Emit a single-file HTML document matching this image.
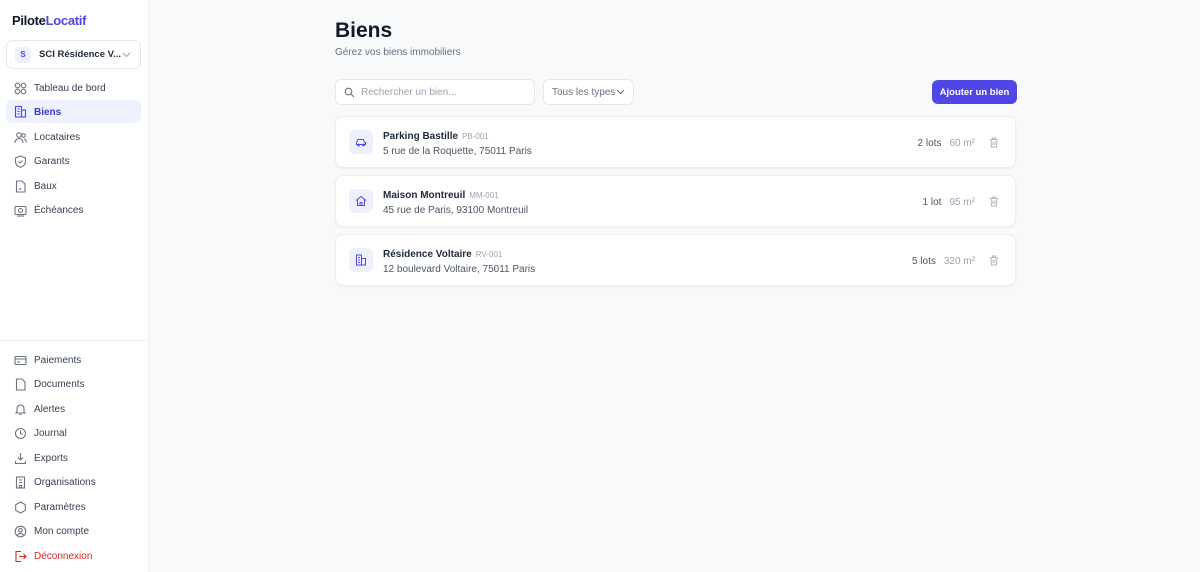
<!DOCTYPE html>
<html><head><meta charset="utf-8"><style>
*{box-sizing:border-box;margin:0;padding:0}
body{width:1200px;height:572px;font-family:"Liberation Sans",sans-serif;background:#f8f9fb;position:relative;overflow:hidden;color:#111827}
.sb{position:absolute;left:0;top:0;width:149px;height:572px;background:#fff;border-right:1px solid #eceef2}
.logo{position:absolute;left:12px;top:13px;font-size:13px;font-weight:bold;color:#111827;letter-spacing:-.3px}
.logo span{color:#4f46e5}
.org{position:absolute;left:6px;top:40px;width:135px;height:29px;border:1px solid #e5e7eb;border-radius:7px;font-size:9.5px;font-weight:bold;color:#1f2937}
.org .av{position:absolute;left:8px;top:6px;width:16px;height:16px;border-radius:4px;background:#eef0fe;color:#4f46e5;font-size:8px;text-align:center;line-height:16px}
.org .t{position:absolute;left:32px;top:8px}
.org svg{position:absolute;right:9px;top:11px}
.it{position:absolute;left:6px;width:135px;height:23px;border-radius:6px;font-size:10px;color:#374151;line-height:23px;padding-left:28px;margin-top:1px}
.it svg{position:absolute;left:8px;top:5px}
.it.a{background:#eef2ff;color:#4338ca;font-weight:bold;margin-top:0;line-height:25px}
.it.r{color:#dc2626}
.div{position:absolute;left:0;top:340px;width:148px;border-top:1px solid #eceef2}
h1{position:absolute;left:335px;top:19px;font-size:21px;font-weight:bold;color:#111827}
.sub{position:absolute;left:335px;top:47px;font-size:10px;color:#6b7280}
.search{position:absolute;left:335px;top:79px;width:200px;height:26px;background:#fff;border:1px solid #e5e7eb;border-radius:6px;font-size:10px;color:#9ca3af;padding-left:25px;display:flex;align-items:center}
.search svg{position:absolute;left:8px;top:7px}
.sel{position:absolute;left:543px;top:79px;width:91px;height:26px;background:#fff;border:1px solid #e5e7eb;border-radius:6px;font-size:10px;color:#6b7280;padding-left:8px;display:flex;align-items:center}
.sel svg{position:absolute;right:8px;top:9px}
.btn{position:absolute;left:932px;top:80px;width:85px;height:24px;background:#4f46e5;border-radius:6px;color:#fff;font-size:9.5px;font-weight:bold;display:flex;align-items:center;justify-content:center}
.card{position:absolute;left:335px;width:681px;height:52px;background:#fff;border:1px solid #eceef2;border-radius:8px;box-shadow:0 1px 2px rgba(0,0,0,.05)}
.ic{position:absolute;left:13px;top:13px;width:24px;height:24px;border-radius:6px;background:#eef0fe}
.ic svg{position:absolute;left:6px;top:6px}
.nm{position:absolute;left:47px;top:14px;font-size:10px;font-weight:bold;color:#1f2937}
.nm span{font-weight:normal;color:#9ca3af;font-size:8px;margin-left:4px}
.ad{position:absolute;left:47px;top:29px;font-size:10px;color:#4b5563}
.rt{position:absolute;right:40px;top:21px;font-size:10px;color:#4b5563}
.rt span{color:#9ca3af;margin-left:8px}
.tr{position:absolute;right:16px;top:20px}
</style></head><body>
<div class="sb">
<div class="logo">Pilote<span>Locatif</span></div>
<div class="org"><div class="av">S</div><div class="t">SCI Résidence V...</div><svg width="9" height="6" viewBox="0 0 9 6"><path d="M1 1l3.5 3.5L8 1" stroke="#9ca3af" fill="none" stroke-width="1.1"/></svg></div>
<div class="it" style="top:76px"><svg width="13" height="13" viewBox="0 0 13 13" fill="none" stroke="#6b7280" stroke-width="1.1"><circle cx="3.5" cy="3.5" r="2.3"/><circle cx="9.5" cy="3.5" r="2.3"/><circle cx="3.5" cy="9.5" r="2.3"/><circle cx="9.5" cy="9.5" r="2.3"/></svg>Tableau de bord</div>
<div class="it a" style="top:100px"><svg width="13" height="13" viewBox="0 0 13 13" fill="none" stroke="#4f46e5" stroke-width="1.1"><rect x="1.5" y="1.5" width="6" height="10.5"/><rect x="7.5" y="5" width="4" height="7"/><path d="M3.5 4h2M3.5 6.5h2M3.5 9h2"/></svg>Biens</div>
<div class="it" style="top:125px"><svg width="13" height="13" viewBox="0 0 13 13" fill="none" stroke="#6b7280" stroke-width="1.1"><circle cx="5" cy="4" r="2.3"/><path d="M1 12c0-3 2-4.5 4-4.5s4 1.5 4 4.5"/><circle cx="9.5" cy="4.5" r="1.8"/><path d="M10 8c1.5.3 2.3 1.6 2.3 3.5"/></svg>Locataires</div>
<div class="it" style="top:149px"><svg width="13" height="13" viewBox="0 0 13 13" fill="none" stroke="#6b7280" stroke-width="1.1"><path d="M6.5 1L11.5 3v3.5c0 3-2.2 4.8-5 5.8-2.8-1-5-2.8-5-5.8V3z"/><path d="M4.5 6.5l1.5 1.5 2.5-2.5"/></svg>Garants</div>
<div class="it" style="top:174px"><svg width="13" height="13" viewBox="0 0 13 13" fill="none" stroke="#6b7280" stroke-width="1.1"><path d="M2.5 1h5.5l3 3v8h-8.5z"/><path d="M4.5 9h3"/></svg>Baux</div>
<div class="it" style="top:198px"><svg width="13" height="13" viewBox="0 0 13 13" fill="none" stroke="#6b7280" stroke-width="1.1"><rect x="1" y="2.5" width="11" height="8" rx="1"/><circle cx="6.5" cy="6.5" r="2"/><path d="M3 12h7"/></svg>Échéances</div>
<div class="div"></div>
<div class="it" style="top:348px"><svg width="13" height="13" viewBox="0 0 13 13" fill="none" stroke="#6b7280" stroke-width="1.1"><rect x="1" y="2.5" width="11" height="8" rx="1"/><path d="M1 5h11M3 8h3"/></svg>Paiements</div>
<div class="it" style="top:372px"><svg width="13" height="13" viewBox="0 0 13 13" fill="none" stroke="#6b7280" stroke-width="1.1"><path d="M2.5 1h5.5l3 3v8h-8.5z"/></svg>Documents</div>
<div class="it" style="top:397px"><svg width="13" height="13" viewBox="0 0 13 13" fill="none" stroke="#6b7280" stroke-width="1.1"><path d="M3 9V5.5a3.5 3.5 0 017 0V9l1 1H2z"/><path d="M5.5 11.5h2"/></svg>Alertes</div>
<div class="it" style="top:421px"><svg width="13" height="13" viewBox="0 0 13 13" fill="none" stroke="#6b7280" stroke-width="1.1"><circle cx="6.5" cy="6.5" r="5"/><path d="M6.5 3.5v3l2 1.3"/></svg>Journal</div>
<div class="it" style="top:446px"><svg width="13" height="13" viewBox="0 0 13 13" fill="none" stroke="#6b7280" stroke-width="1.1"><path d="M6.5 1v7M4 5.5l2.5 2.5L9 5.5M1.5 9v2.5h10V9"/></svg>Exports</div>
<div class="it" style="top:470px"><svg width="13" height="13" viewBox="0 0 13 13" fill="none" stroke="#6b7280" stroke-width="1.1"><rect x="2.5" y="1" width="8" height="11"/><path d="M5 4h3M5 6.5h3M5.5 12V9.5h2V12"/></svg>Organisations</div>
<div class="it" style="top:495px"><svg width="13" height="13" viewBox="0 0 13 13" fill="none" stroke="#6b7280" stroke-width="1.1"><path d="M6.5 1l4.8 2.7v5.6L6.5 12 1.7 9.3V3.7z"/></svg>Paramètres</div>
<div class="it" style="top:519px"><svg width="13" height="13" viewBox="0 0 13 13" fill="none" stroke="#6b7280" stroke-width="1.1"><circle cx="6.5" cy="6.5" r="5.3"/><circle cx="6.5" cy="5.3" r="1.8"/><path d="M3.3 10.5c1-1.5 2-2 3.2-2s2.2.5 3.2 2"/></svg>Mon compte</div>
<div class="it r" style="top:544px"><svg width="13" height="13" viewBox="0 0 13 13" fill="none" stroke="#dc2626" stroke-width="1.1"><path d="M7 1.5H2v10h5M5 6.5h7M9.5 4l2.5 2.5L9.5 9"/></svg>Déconnexion</div>
</div>
<h1>Biens</h1>
<div class="sub">Gérez vos biens immobiliers</div>
<div class="search"><svg width="11" height="11" viewBox="0 0 11 11" fill="none" stroke="#6b7280" stroke-width="1.1"><circle cx="4.5" cy="4.5" r="3.3"/><path d="M7 7l3 3"/></svg>Rechercher un bien...</div>
<div class="sel">Tous les types<svg width="9" height="6" viewBox="0 0 9 6"><path d="M1 1l3.5 3.5L8 1" stroke="#6b7280" fill="none" stroke-width="1.1"/></svg></div>
<div class="btn">Ajouter un bien</div>

<div class="card" style="top:116px"><div class="ic"><svg width="12" height="12" viewBox="0 0 12 12" fill="none" stroke="#4f46e5" stroke-width="1"><path d="M1.5 8.5V6.5l1.5-3h5l2 3h.5v2z"/><circle cx="3.5" cy="9" r=".9"/><circle cx="8.5" cy="9" r=".9"/></svg></div><div class="nm">Parking Bastille<span>PB-001</span></div><div class="ad">5 rue de la Roquette, 75011 Paris</div><div class="rt">2 lots<span>60 m²</span></div><svg class="tr" width="10" height="11" viewBox="0 0 10 11" fill="none" stroke="#b0b5bf" stroke-width="1"><path d="M1 2.5h8M3.5 2.5V1h3v1.5M2 2.5l.5 7.5h5l.5-7.5M4 4.5v3.5M6 4.5v3.5"/></svg></div>
<div class="card" style="top:175px"><div class="ic"><svg width="12" height="12" viewBox="0 0 12 12" fill="none" stroke="#4f46e5" stroke-width="1"><path d="M1 5.5L6 1.5l5 4M2.5 4.5v6h7v-6M5 10.5V7.5h2v3"/></svg></div><div class="nm">Maison Montreuil<span>MM-001</span></div><div class="ad">45 rue de Paris, 93100 Montreuil</div><div class="rt">1 lot<span>95 m²</span></div><svg class="tr" width="10" height="11" viewBox="0 0 10 11" fill="none" stroke="#b0b5bf" stroke-width="1"><path d="M1 2.5h8M3.5 2.5V1h3v1.5M2 2.5l.5 7.5h5l.5-7.5M4 4.5v3.5M6 4.5v3.5"/></svg></div>
<div class="card" style="top:234px"><div class="ic"><svg width="12" height="12" viewBox="0 0 12 12" fill="none" stroke="#4f46e5" stroke-width="1"><rect x="1.5" y="1" width="5" height="10"/><rect x="6.5" y="4.5" width="4" height="6.5"/><path d="M3 3.5h2M3 6h2M3 8.5h2"/></svg></div><div class="nm">Résidence Voltaire<span>RV-001</span></div><div class="ad">12 boulevard Voltaire, 75011 Paris</div><div class="rt">5 lots<span>320 m²</span></div><svg class="tr" width="10" height="11" viewBox="0 0 10 11" fill="none" stroke="#b0b5bf" stroke-width="1"><path d="M1 2.5h8M3.5 2.5V1h3v1.5M2 2.5l.5 7.5h5l.5-7.5M4 4.5v3.5M6 4.5v3.5"/></svg></div>
</body></html>
